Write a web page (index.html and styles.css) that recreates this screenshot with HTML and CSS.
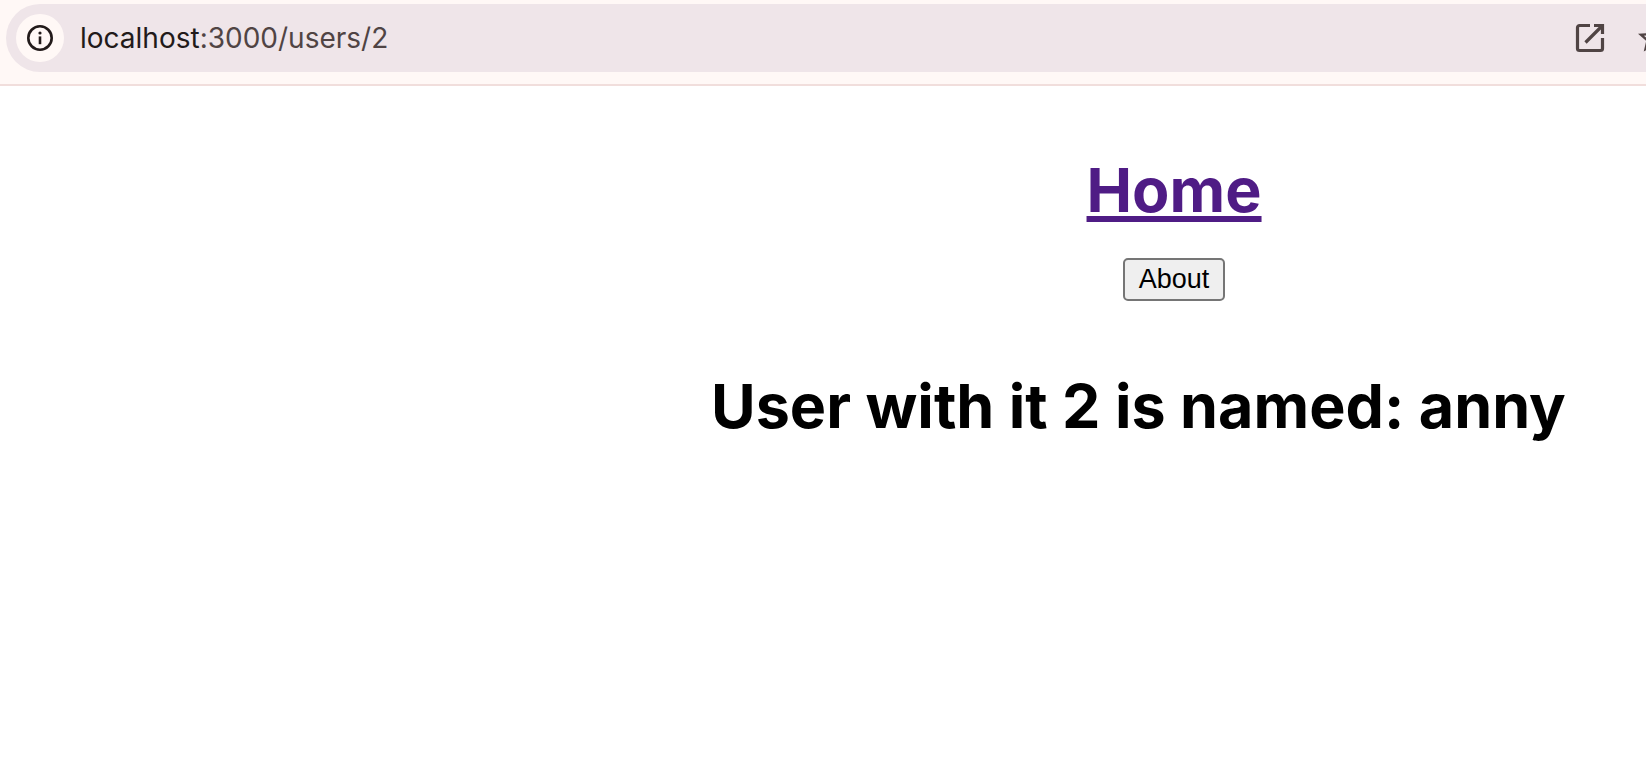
FILE: index.html
```html
<!DOCTYPE html>
<html lang="en">
<head>
<meta charset="utf-8">
<title>User 2</title>
<link rel="stylesheet" href="styles.css">
</head>
<body>
<header class="toolbar">
  <div class="omnibox">
    <button class="site-info" type="button" aria-label="View site information">
      <svg width="32" height="32" viewBox="0 0 32 32" fill="none"><circle cx="16" cy="16" r="11.7" stroke="currentColor" stroke-width="2.6"/><path d="M16 14.4v7.8" stroke="currentColor" stroke-width="2.6"/><circle cx="16" cy="11" r="1.6" fill="currentColor"/></svg>
    </button>
    <div class="address" role="textbox" aria-label="Address" contenteditable="true" spellcheck="false"><span class="host">localhost</span>:3000/users/2</div>
    <button class="action" type="button" aria-label="Open in app">
      <svg width="30" height="30" viewBox="0 0 30 30" fill="none" stroke="currentColor" stroke-width="3.2"><path d="M15 2.5H4.500a2 2 0 0 0-2 2v21a2 2 0 0 0 2 2h21a2 2 0 0 0 2-2V15M19 2.500h8.500V11M27 3 10.500 19.500"/></svg>
    </button>
    <button class="action star" type="button" aria-label="Bookmark this tab">
      <svg width="36" height="36" viewBox="0 0 24 24" fill="currentColor"><path d="M22 9.240l-7.190-.620L12 2 9.190 8.630 2 9.240l5.460 4.730L5.820 21 12 17.270 18.180 21l-1.630-7.030L22 9.240zM12 15.400l-3.760 2.270 1-4.280-3.320-2.880 4.380-.380L12 6.100l1.710 4.040 4.380.380-3.320 2.880 1 4.280L12 15.400z"/></svg>
    </button>
  </div>
</header>
<main class="page">
  <nav class="nav">
    <h1 class="title"><a class="home" href="#">Home</a></h1>
    <button class="about" type="button">About</button>
  </nav>
  <h1 class="title">User with it 2 is named: anny</h1>
</main>
</body>
</html>
```
FILE: styles.css
```css
* {
  box-sizing: border-box;
}

body {
  margin: 0;
  background: #fff;
  color: #000;
  font-family: Inter, "Liberation Sans", sans-serif;
  overflow-x: hidden;
}

.toolbar {
  padding: 4px 0 12px 6px;
  background: #fff8f6;
  border-bottom: 2px solid #f1dedc;
  overflow: hidden;
}

.omnibox {
  display: flex;
  align-items: center;
  height: 68px;
  padding-left: 10px;
  background: #efe5e9;
  border-radius: 34px 0 0 34px;
}

.site-info,
.action {
  display: flex;
  flex: none;
  align-items: center;
  justify-content: center;
  padding: 0;
  border: 0;
  background: none;
  color: #504444;
}

.site-info {
  width: 48px;
  height: 48px;
  border-radius: 50%;
  background: #fff8f6;
  color: #221a1a;
}

.address {
  flex: 1;
  padding-left: 16px;
  color: #504444;
  font-size: 28px;
  line-height: 34px;
  white-space: nowrap;
  outline: none;
}

.host {
  color: #221a1a;
}

.star {
  margin: 0 -25px 0 30px;
}

.page {
  display: flex;
  flex-direction: column;
  gap: 67px;
  margin: 66px 9px 0 43.2%;
}

.nav {
  display: flex;
  flex-direction: column;
  align-items: center;
  gap: 30px;
}

.title {
  margin: 0;
  font-size: 61px;
  font-weight: 700;
  line-height: 76px;
  white-space: nowrap;
}

.home {
  color: #4f1c85;
  text-decoration-thickness: 6px;
  text-underline-offset: 4px;
}

.about {
  padding: 4px 14px;
  border: 2px solid #757575;
  border-radius: 5px;
  background: #efefef;
  color: #000;
  font-family: "Liberation Sans", Arial, sans-serif;
  font-size: 27px;
  line-height: 31px;
}
```
